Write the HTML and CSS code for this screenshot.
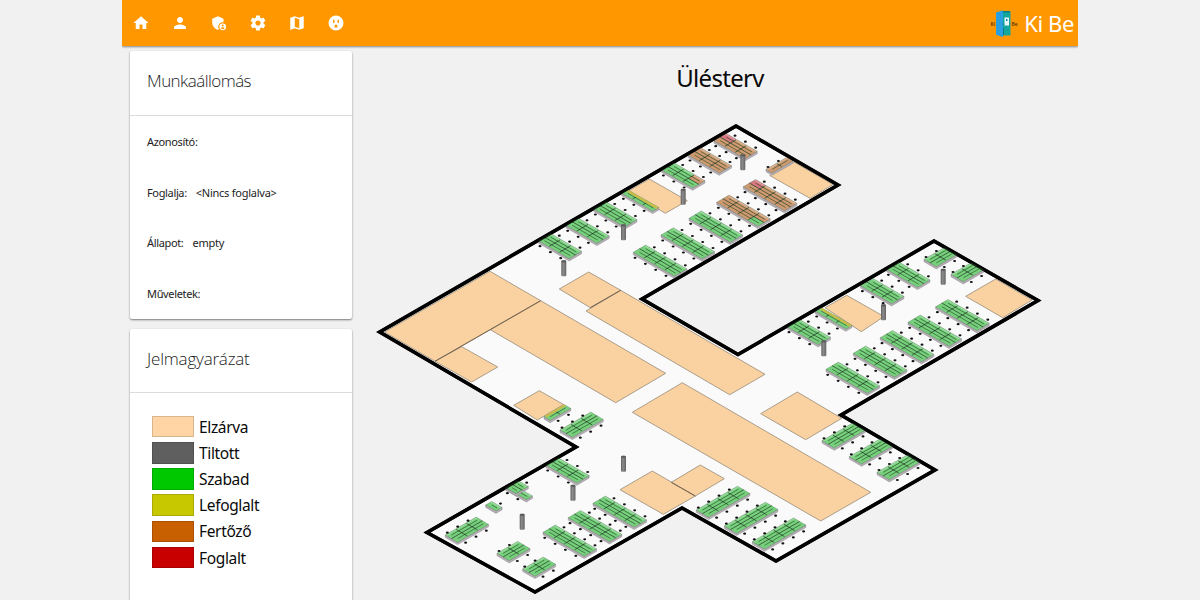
FILE: index.html
```html
<!DOCTYPE html>
<html lang="hu">
<head>
<meta charset="utf-8">
<title>Ki Be</title>
<link rel="stylesheet" href="styles.css">
</head>
<body>
<div class="page">
  <header class="topbar">
    <nav class="nav">
      <svg class="icon" viewBox="0 0 24 24"><path d="M10 20v-6h4v6h5v-8h3L12 3 2 12h3v8z"/></svg>
      <svg class="icon" viewBox="0 0 24 24"><path d="M12 12c2.21 0 4-1.79 4-4s-1.79-4-4-4-4 1.790-4 4 1.790 4 4 4zm0 2c-2.670 0-8 1.340-8 4v2h16v-2c0-2.660-5.330-4-8-4z"/></svg>
      <svg class="icon" viewBox="0 0 24 24"><path d="M17 11c.340 0 .670.040 1 .090V6.270L10.500 3 3 6.270v4.910c0 4.540 3.200 8.790 7.500 9.820.550-.130 1.080-.320 1.600-.550-.690-.980-1.100-2.170-1.100-3.450 0-3.310 2.690-6 6-6z"/><path fill-rule="evenodd" d="M17 12.500a4.500 4.500 0 1 0 0 9 4.500 4.500 0 0 0 0-9zm0 1.600a1.350 1.350 0 1 1 0 2.700 1.350 1.350 0 0 1 0-2.700zm0 6.100c-1 0-1.900-.5-2.400-1.300.050-.8 1.600-1.200 2.400-1.200s2.350.4 2.400 1.200c-.5.8-1.400 1.300-2.400 1.300z"/></svg>
      <svg class="icon" viewBox="0 0 24 24"><path d="M19.430 12.980c.040-.320.070-.640.070-.980s-.030-.660-.070-.980l2.110-1.650c.190-.150.240-.420.120-.640l-2-3.460c-.120-.220-.390-.300-.610-.220l-2.490 1c-.520-.400-1.080-.730-1.690-.980l-.380-2.650C14.460 2.180 14.250 2 14 2h-4c-.250 0-.460.180-.490.420l-.380 2.650c-.610.250-1.170.590-1.690.980l-2.490-1c-.230-.090-.490 0-.610.220l-2 3.460c-.130.220-.070.490.120.640l2.110 1.650c-.040.320-.070.650-.070.980s.030.660.070.980l-2.110 1.650c-.190.150-.240.420-.120.640l2 3.460c.120.220.390.300.610.220l2.490-1c.520.400 1.080.730 1.690.980l.380 2.650c.030.240.240.420.490.420h4c.250 0 .460-.180.490-.420l.380-2.650c.610-.250 1.170-.590 1.690-.980l2.490 1c.230.090.490 0 .610-.220l2-3.460c.120-.220.070-.490-.120-.640l-2.110-1.650zM12 15.500c-1.930 0-3.500-1.570-3.500-3.500s1.570-3.500 3.500-3.500 3.500 1.570 3.500 3.500-1.570 3.500-3.500 3.500z"/></svg>
      <svg class="icon" viewBox="0 0 24 24"><path d="M20.500 3l-.160.030L15 5.100 9 3 3.360 4.900c-.210.070-.360.250-.360.480V20.500c0 .280.220.500.500.500l.160-.030L9 18.900l6 2.100 5.640-1.900c.210-.070.360-.250.360-.480V3.500c0-.280-.220-.500-.500-.500zM15 19l-6-2.110V5l6 2.110V19z"/></svg>
      <svg class="icon" viewBox="0 0 24 24"><path fill-rule="evenodd" d="M12 2a10 10 0 1 0 0 20 10 10 0 0 0 0-20zM8 7.500h2v4.500H8zM14 7.500h2v4.500h-2zM10 18v-2a2 2 0 0 1 4 0v2z"/></svg>
    </nav>
    <div class="brand">
      <svg class="logo" viewBox="0 0 28 30">
        <path fill="#12a79c" d="M13 3.500h7.500v24H13z"/>
        <path fill="#2a9fe0" d="M6 4.500 13 2.200v27L6 26.700z"/>
        <path fill="#087c86" d="M13 3h7v1.500h-7zM13 20h1v7h-1z"/>
        <path fill="#e9f7fa" d="M14.500 9.500h4.500v8h-4.500z"/>
        <path fill="#1987b5" d="M16 11h1.500v2H16zM12.200 15.500h2v1.500h-2z"/>
        <text class="logo-text" x=".5" y="17.500">Ki</text>
        <text class="logo-text" x="21.500" y="17.500">Be</text>
      </svg>
      <span class="brand-name">Ki Be</span>
    </div>
  </header>
  <div class="content">
    <aside class="side">
      <section class="card">
        <h2 class="card-title card-title-tight">Munkaállomás</h2>
        <dl class="info">
          <div class="row"><dt>Azonosító:</dt></div>
          <div class="row"><dt>Foglalja:</dt><dd>&lt;Nincs foglalva&gt;</dd></div>
          <div class="row"><dt>Állapot:</dt><dd>empty</dd></div>
          <div class="row"><dt>Műveletek:</dt></div>
        </dl>
      </section>
      <section class="card card-legend">
        <h2 class="card-title">Jelmagyarázat</h2>
        <ul class="legend">
          <li><i class="swatch closed"></i>Elzárva</li>
          <li><i class="swatch banned"></i>Tiltott</li>
          <li><i class="swatch free"></i>Szabad</li>
          <li><i class="swatch reserved"></i>Lefoglalt</li>
          <li><i class="swatch infected"></i>Fertőző</li>
          <li><i class="swatch taken"></i>Foglalt</li>
        </ul>
      </section>
    </aside>
    <main class="main">
      <h1 class="title">Ülésterv</h1>
      <svg class="plan" id="plan" viewBox="362 110 716 490"></svg>
    </main>
  </div>
</div>
<script src="plan.js"></script>
</body>
</html>
```

FILE: styles.css
```css
* { box-sizing: border-box; }
body {
  margin: 0;
  height: 600px;
  overflow: hidden;
  background: #f1f1f1;
  color: #0a0a0a;
  font-family: "Noto Sans", "Open Sans", sans-serif;
}
.page { width: 956px; height: 600px; margin: 0 auto; overflow: hidden; }
.topbar {
  height: 46px;
  padding: 0 4px 0 10px;
  display: flex;
  align-items: center;
  justify-content: space-between;
  background: #ff9800;
  color: #fff;
  box-shadow: 0 1px 2px rgba(0, 0, 0, .45);
}
.nav { display: flex; gap: 21px; }
.icon { width: 18px; height: 18px; fill: #fff; display: block; }
.brand { display: flex; align-items: center; gap: 6px; }
.logo { width: 28px; height: 30px; display: block; }
.logo-text { font-size: 5px; font-weight: 600; fill: #603a05; }
.brand-name { font-size: 22px; line-height: 30px; letter-spacing: -.4px; }
.content { display: flex; padding: 5px 0 0 8px; }
.side { width: 222px; display: flex; flex-direction: column; gap: 10px; }
.card {
  height: 268px;
  background: #fff;
  border-radius: 2px;
  box-shadow: 0 1px 2px rgba(0, 0, 0, .5);
}
.card-legend { height: 300px; }
.card-title {
  margin: 0;
  height: 64px;
  padding-left: 17px;
  border-bottom: 1px solid #dcdcdc;
  font-family: "Open Sans", "Noto Sans", sans-serif;
  font-size: 17px;
  line-height: 60px;
  font-weight: 300;
  letter-spacing: -.2px;
  color: #222;
}
.card-title-tight { height: 65px; letter-spacing: -.55px; }
.info { margin: 0; padding: 0 17px; }
.row {
  height: 50.700px;
  display: flex;
  gap: 9px;
  font-size: 11px;
  line-height: 51px;
  letter-spacing: -.35px;
  color: #222;
}
.row dd { margin: 0; letter-spacing: -.25px; }
.legend { list-style: none; margin: 0; padding: 20.500px 0 0 22px; }
.legend li {
  height: 26.200px;
  display: flex;
  align-items: center;
  gap: 5px;
  font-size: 15.500px;
  line-height: 22px;
  letter-spacing: -.35px;
}
.swatch { width: 42px; height: 21.500px; border: 1px solid rgba(0, 0, 0, .15); }
.closed { background: #ffd5a5; }
.banned { background: #5f5f5f; }
.free { background: #00c800; }
.reserved { background: #c8c800; }
.infected { background: #c85f00; }
.taken { background: #c80000; }
.main { width: 716px; margin-left: 10px; }
.title {
  margin: 0;
  height: 59px;
  font-size: 24px;
  line-height: 54px;
  font-weight: 400;
  letter-spacing: -.7px;
  text-align: center;
}
.plan { width: 716px; height: 490px; display: block; }
.floor { fill: #fafafa; }
.wall { fill: none; stroke: #000; stroke-width: 3.500; stroke-miterlimit: 8; }
.room { fill: #fad2a2; stroke: #a29582; stroke-width: .9; }
.seam { stroke: #74624b; stroke-width: 1; }
.side-face { fill: #b5afb5; stroke: #8f8b8f; stroke-width: .5; }
.seat { stroke: none; }
.seat-g { fill: #77d07c; }
.seat-b { fill: #cf9a70; }
.seat-p { fill: #d77880; }
.glass { stroke: #fff; stroke-opacity: .28; stroke-width: 1.300; }
.line { stroke: #0b2a10; stroke-opacity: .75; stroke-width: .9; }
.line-soft { stroke: #123a18; stroke-opacity: .6; stroke-width: .9; }
.rim { fill: none; stroke: #3f5d45; stroke-opacity: .6; stroke-width: .5; }
.strip { stroke: #c9bb45; stroke-width: 2.200; }
.chair { fill: #111; }
```

FILE: plan.js
```js
const svg = document.getElementById("plan");
const out = [];
const pts = list => list.map(p => p.map(n => n.toFixed(1)).join(",")).join(" ");
const poly = (cls, list) => out.push(`<polygon class="${cls}" points="${pts(list)}"/>`);
const line = (cls, a, b) => out.push(`<line class="${cls}" x1="${a[0]}" y1="${a[1]}" x2="${b[0]}" y2="${b[1]}"/>`);

const outline = [[736,126],[838,185],[642,299],[738,354.5],[934,241],[1038,300.5],[841,415],
  [935,470],[776,561],[682,508],[535,592],[427,532.5],[576,447],[379.7,332]];

const rooms = [
  [[649.3,179],[687.3,200.7],[665.3,213.3],[628.3,191]],
  [[794,162],[833,184.5],[810,198.3],[769.7,175.5]],
  [[846.7,295.3],[884,316.5],[861.3,331.7],[825,307.7]],
  [[995.7,279],[1032,300],[1002.7,317.7],[965.7,296.3]],
  [[539.3,390.7],[563.5,404.5],[537.3,420],[513.7,405.3]],
  [[682.3,382.7],[870.7,492.3],[820.7,521],[632.3,412.3]],
  [[797.3,392],[841.7,418.3],[805.7,439.7],[760.7,413.7]],
  [[652.3,471],[695.3,496],[663.3,514.3],[620,489.7]],
  [[700.3,465],[724.3,478.7],[695.3,496],[671.3,482.3]],
  [[490,271.3],[540.7,300.7],[435,361.3],[384.7,332]],
  [[540.7,300.7],[665.7,373.3],[615.7,402.7],[490.3,329.7]],
  [[461.7,346.7],[497.7,367],[471.7,382],[435,361.3]],
  [[588.7,272],[620.7,290.3],[590.3,307.7],[559.3,289]],
  [[620.7,290.3],[765,374.3],[729.7,394.7],[586,311]]
];
const seams = [[[540.7,300.7],[435,361.3]],[[620.7,290.3],[590.3,307.7]],[[671.3,482.3],[695.3,496]]];

// x, y of the left corner, direction (1 = down right, -1 = up right), columns, rows, colour, {column,row: colour}
const desks = [
  [714,140.7,1,3,2,"b",{"0,1":"p"}], [688.3,155,1,3,2,"b"], [661.7,170,1,3,2,"g",{"2,1":"b"}],
  [621.7,193.3,1,3,1,"g",{},1], [593.7,209,1,3,2,"g"], [566,225.3,1,3,2,"g"], [538.3,240.7,1,3,2,"g"],
  [766,169.3,-1,2,1,"b"],
  [743.3,186.7,1,4,2,"b",{"0,1":"p"}], [716.7,202.3,1,4,2,"b",{"3,0":"g"}], [689,218.3,1,4,2,"g"],
  [661,235,1,4,2,"g"], [633.3,252.3,1,4,2,"g"],
  [924,259.3,-1,2,2,"g"], [951,274.3,-1,2,2,"g"],
  [886.7,269.3,1,3,2,"g"], [860.7,285.7,1,3,2,"g"], [815,311,1,3,1,"g",{},1], [787.3,326.7,1,3,2,"g"],
  [935.7,306.7,1,4,2,"g"], [908,322.3,1,4,2,"g"], [880.3,337.7,1,4,2,"g"], [853.3,353.3,1,4,2,"g"],
  [826,369.3,1,4,2,"g"],
  [544,416.7,-1,2,1,"g",{},1], [560,430,-1,3,2,"g"],
  [546,465,1,3,2,"g"], [505.7,487.7,1,2,1,"g"], [505.7,487.7,1,1,2,"g"], [485.7,505,1,1,1,"g"],
  [445.3,535,-1,3,2,"g"], [497,553.3,-1,2,2,"g"], [522.7,569,-1,2,2,"g"],
  [593,503.3,1,4,2,"g"], [568.3,517.7,1,4,2,"g"], [543,532.3,1,4,2,"g"],
  [696.3,510,-1,4,2,"g"], [724.3,526,-1,4,2,"g"], [752.3,541.7,-1,4,2,"g"],
  [822,440.7,-1,3,2,"g"], [849.3,456.7,-1,3,2,"g"], [877,472.3,-1,3,2,"g"]
];
const pillars = [[740.3,154],[680.7,188.5],[621,224],[561.3,260],[940.7,268.5],[881,304],[821.3,340],
  [621,455.5],[570.5,484.5],[519.7,513.5]];

function desk([x, y, dir, cols, rows, color, special = {}, strip]) {
  const at = (c, r) => [x + c * 10.3 + r * 6.15, y + dir * (c * 5.95 - r * 3.6)];
  const drop = p => [p[0], p[1] + 2.4];
  if (dir > 0) poly("side-face", [at(0, 0), at(cols, 0), at(cols, rows), drop(at(cols, rows)), drop(at(cols, 0)), drop(at(0, 0))]);
  else poly("side-face", [at(0, 0), at(0, rows), at(cols, rows), drop(at(cols, rows)), drop(at(0, rows)), drop(at(0, 0))]);
  for (let c = 0; c < cols; c++)
    for (let r = 0; r < rows; r++)
      poly("seat seat-" + (special[c + "," + r] || color), [at(c, r), at(c + 1, r), at(c + 1, r + 1), at(c, r + 1)]);
  const back = dir > 0 ? rows - .15 : .15;
  line("glass", at(0, back), at(cols, back));
  for (let r = 0; r < rows; r++) {
    line("line-soft", at(.3, r + .5), at(cols - .2, r + .5));
    if (r) line("line", at(0, r), at(cols, r));
  }
  for (let c = 1; c < cols; c++) line("line", at(c, .1), at(c, rows - .1));
  poly("rim", [at(0, 0), at(cols, 0), at(cols, rows), at(0, rows)]);
  if (strip) line("strip", at(.1, dir > 0 ? .8 : .1), at(cols, dir > 0 ? .8 : .1));
  const chair = (cx, cy) => out.push(`<ellipse class="chair" cx="${cx.toFixed(1)}" cy="${cy.toFixed(1)}" rx="1.5" ry="1.1"/>`);
  for (let c = 0; c < cols; c++) {
    const dx = c * 10.35, dy = dir * c * 6;
    if (dir > 0) {
      if (!(cols === 1)) chair(x + 1.7 + dx, y + 5.5 + dy);
      if (rows === 2 || cols === 1) chair(x + 8.7 + rows * 6.15 + dx, y + 2.2 - rows * 3.6 + dy);
    } else {
      if (rows === 2 || color === "b") chair(x + 2 + dx, y - 2.3 + dy);
      if (color === "g") chair(x + 8 + rows * 6.15 + dx, y + .5 + rows * 3.6 + dy);
    }
  }
}

out.push(`<defs><clipPath id="inside"><polygon points="${pts(outline)}"/></clipPath>
<linearGradient id="metal"><stop offset="0" stop-color="#606060"/><stop offset=".4" stop-color="#8c8c8c"/><stop offset="1" stop-color="#646464"/></linearGradient></defs>`);
poly("floor", outline);
poly("wall", outline);
out.push(`<g clip-path="url(#inside)">`);
rooms.forEach(r => poly("room", r));
seams.forEach(s => line("seam", s[0], s[1]));
desks.forEach(desk);
out.push("</g>");
out.push(`<g opacity=".82">`);
poly("wall", outline);
out.push("</g>");
pillars.forEach(([x, y]) => out.push(`<rect x="${x}" y="${y + .3}" width="5" height="16" rx="1.200" fill="url(#metal)"/><ellipse cx="${x + 2.5}" cy="${y + 1.4}" rx="2.3" ry="1.1" fill="#5c5c5c"/>`));
svg.innerHTML = out.join("");
```
